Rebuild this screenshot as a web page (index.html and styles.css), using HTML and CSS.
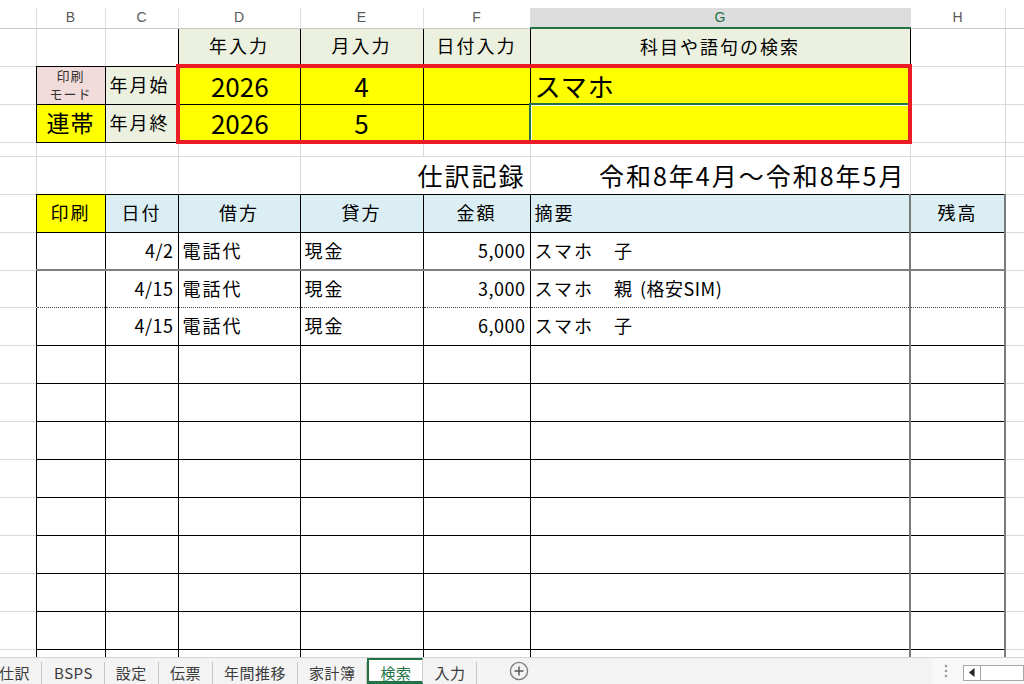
FILE: index.html
```html
<!DOCTYPE html>
<html lang="ja">
<head>
    <meta charset="UTF-8">
    <meta name="viewport" content="width=device-width, initial-scale=1.0">
    <title>検索 - 仕訳記録</title>
    <link rel="stylesheet" href="styles.css">
</head>
<body>
    <div class="ribbon-edge"></div>
    <div class="sheet">
        <table class="grid">
            <colgroup>
                <col class="ca"><col class="cb"><col class="cc"><col class="cd"><col class="ce"><col class="cf"><col class="cg"><col class="ch"><col class="ci">
            </colgroup>
            <thead>
                <tr class="colhdr">
                    <th></th><th>B</th><th>C</th><th>D</th><th>E</th><th>F</th><th class="sel">G</th><th>H</th><th></th>
                </tr>
            </thead>
            <tbody>
                <tr>
                    <td></td><td></td><td></td>
                    <td class="box top head-g c">年入力</td>
                    <td class="box top head-g c">月入力</td>
                    <td class="box top head-g c">日付入力</td>
                    <td class="box top head-g c">科目や語句の検索</td>
                    <td></td><td></td>
                </tr>
                <tr>
                    <td></td>
                    <td class="box top mode c">印刷<br>モード</td>
                    <td class="box top head-g l">年月始</td>
                    <td class="box yel big c rl rt">2026</td>
                    <td class="box yel big c rt">4</td>
                    <td class="box yel rt"></td>
                    <td class="box yel kw rt rr">スマホ</td>
                    <td></td><td></td>
                </tr>
                <tr>
                    <td></td>
                    <td class="box yel rentai c">連帯</td>
                    <td class="box head-g l">年月終</td>
                    <td class="box yel big c rl rb">2026</td>
                    <td class="box yel big c rb">5</td>
                    <td class="box yel rb"></td>
                    <td class="box yel active rb rr"></td>
                    <td></td><td></td>
                </tr>
                <tr class="gap">
                    <td></td><td></td><td></td><td></td><td></td><td></td><td></td><td></td><td></td>
                </tr>
                <tr>
                    <td></td><td></td><td></td><td></td>
                    <td colspan="2" class="title r">仕訳記録</td>
                    <td class="title r">令和8年4月～令和8年5月</td>
                    <td></td><td></td>
                </tr>
                <tr>
                    <td></td>
                    <td class="box top yel c">印刷</td>
                    <td class="box top blue c">日付</td>
                    <td class="box top blue c">借方</td>
                    <td class="box top blue c">貸方</td>
                    <td class="box top blue c">金額</td>
                    <td class="box top blue l">摘要</td>
                    <td class="hcol top blue c">残高</td>
                    <td></td>
                </tr>
                <tr class="r-mid">
                    <td></td><td class="box"></td>
                    <td class="box num">4/2</td>
                    <td class="box l">電話代</td>
                    <td class="box l">現金</td>
                    <td class="box num">5,000</td>
                    <td class="box l">スマホ　子</td>
                    <td class="hcol"></td><td></td>
                </tr>
                <tr class="r-dot">
                    <td class="gl"></td><td class="box"></td>
                    <td class="box num">4/15</td>
                    <td class="box l">電話代</td>
                    <td class="box l">現金</td>
                    <td class="box num">3,000</td>
                    <td class="box l">スマホ　親 <span class="paren">(格安SIM)</span></td>
                    <td class="hcol"></td><td class="gl"></td>
                </tr>
                <tr>
                    <td></td><td class="box"></td>
                    <td class="box num">4/15</td>
                    <td class="box l">電話代</td>
                    <td class="box l">現金</td>
                    <td class="box num">6,000</td>
                    <td class="box l">スマホ　子</td>
                    <td class="hcol"></td><td></td>
                </tr>
                <tr><td></td><td class="box"></td><td class="box"></td><td class="box"></td><td class="box"></td><td class="box"></td><td class="box"></td><td class="hcol"></td><td></td></tr>
                <tr><td></td><td class="box"></td><td class="box"></td><td class="box"></td><td class="box"></td><td class="box"></td><td class="box"></td><td class="hcol"></td><td></td></tr>
                <tr><td></td><td class="box"></td><td class="box"></td><td class="box"></td><td class="box"></td><td class="box"></td><td class="box"></td><td class="hcol"></td><td></td></tr>
                <tr><td></td><td class="box"></td><td class="box"></td><td class="box"></td><td class="box"></td><td class="box"></td><td class="box"></td><td class="hcol"></td><td></td></tr>
                <tr><td></td><td class="box"></td><td class="box"></td><td class="box"></td><td class="box"></td><td class="box"></td><td class="box"></td><td class="hcol"></td><td></td></tr>
                <tr><td></td><td class="box"></td><td class="box"></td><td class="box"></td><td class="box"></td><td class="box"></td><td class="box"></td><td class="hcol"></td><td></td></tr>
                <tr><td></td><td class="box"></td><td class="box"></td><td class="box"></td><td class="box"></td><td class="box"></td><td class="box"></td><td class="hcol"></td><td></td></tr>
                <tr><td></td><td class="box"></td><td class="box"></td><td class="box"></td><td class="box"></td><td class="box"></td><td class="box"></td><td class="hcol"></td><td></td></tr>
                <tr><td></td><td class="box"></td><td class="box"></td><td class="box"></td><td class="box"></td><td class="box"></td><td class="box"></td><td class="hcol"></td><td></td></tr>
            </tbody>
        </table>
    </div>
    <div class="tabbar">
        <div class="tabs">
            <span class="tab">仕訳</span>
            <span class="tab latin">BSPS</span>
            <span class="tab">設定</span>
            <span class="tab">伝票</span>
            <span class="tab">年間推移</span>
            <span class="tab">家計簿</span>
            <span class="tab active">検索</span>
            <span class="tab">入力</span>
        </div>
        <span class="add-sheet">
            <svg width="20" height="20" viewBox="0 0 20 20">
                <circle cx="10" cy="10" r="8.6" fill="none" stroke="#7a7a7a" stroke-width="1.3"/>
                <path d="M10 5.5v9M5.5 10h9" stroke="#555" stroke-width="1.4"/>
            </svg>
        </span>
        <div class="hbar">
            <svg class="grip" width="4" height="14" viewBox="0 0 4 14">
                <circle cx="2" cy="2" r="1.3" fill="#9c9c9c"/>
                <circle cx="2" cy="7" r="1.3" fill="#9c9c9c"/>
                <circle cx="2" cy="12" r="1.3" fill="#9c9c9c"/>
            </svg>
            <div class="hscroll">
                <span class="arrow">
                    <svg width="6" height="9" viewBox="0 0 6 9"><path d="M5.5 0v9L0 4.5z" fill="#222"/></svg>
                </span>
                <span class="track"></span>
            </div>
        </div>
    </div>
</body>
</html>
```

FILE: styles.css
```css
* {
    box-sizing: border-box;
}
html, body {
    margin: 0;
    padding: 0;
}
body {
    width: 1024px;
    height: 684px;
    overflow: hidden;
    background-color: #ffffff;
    color: #000000;
    font-family: "Noto Sans CJK JP", "Noto Sans", sans-serif;
}
.ribbon-edge {
    height: 8px;
    background-color: #ffffff;
}
.sheet {
    height: 649px;
    overflow: hidden;
}

/* grid */
.grid {
    border-collapse: collapse;
    table-layout: fixed;
    width: 1065px;
}
.grid col {
    border-right: 1px solid #d9d9d9;
}
.ca { width: 36px; }
.cb { width: 69px; }
.cc { width: 73px; }
.cd { width: 122px; }
.ce { width: 123px; }
.cf { width: 107px; }
.cg { width: 380px; }
.ch { width: 95px; }
.ci { width: 60px; }

.colhdr th {
    height: 20px;
    padding: 0;
    font-family: "Liberation Sans", sans-serif;
    font-size: 14px;
    font-weight: normal;
    line-height: 19px;
    color: #5a5a5a;
    text-align: center;
    border-right: 1px solid #e0e0e0;
    border-bottom: 1px solid #c8c8c8;
}
.colhdr th.sel {
    background-color: #dcdcdc;
    color: #217346;
    border-bottom: 2px solid #217346;
}
.grid tbody tr {
    height: 38px;
    border-bottom: 1px solid #d9d9d9;
}
.grid tbody tr.gap {
    height: 14px;
}
.grid td {
    padding: 0 4px;
    font-size: 18px;
    letter-spacing: 2px;
    line-height: 1.2;
    white-space: nowrap;
    overflow: hidden;
    vertical-align: middle;
}
.paren {
    letter-spacing: 0.5px;
}

/* alignment */
.c { text-align: center; }
.l { text-align: left; }
.r { text-align: right; }
.num {
    text-align: right;
    letter-spacing: 0.5px !important;
}

/* fills */
.yel { background-color: #ffff00; }
.blue { background-color: #daeef3; }
.head-g { background-color: #ebf1de; }
.mode {
    background-color: #f2dcdb;
    font-size: 13px !important;
    line-height: 18px !important;
    color: #333333;
    letter-spacing: 1px !important;
}

/* borders */
.box {
    border-left: 1px solid #000000;
    border-right: 1px solid #000000;
    border-bottom: 1px solid #000000;
}
.hcol {
    border-left: 2px solid #7a7a7a;
    border-right: 2px solid #7a7a7a;
    border-bottom: 1px solid #000000;
}
.top {
    border-top: 1px solid #000000;
}
.r-mid .box, .r-mid .hcol {
    border-bottom: 2px solid #7f7f7f;
}
.grid tbody tr.r-dot {
    height: 37px;
    border-bottom: none;
}
.r-dot .box, .r-dot .hcol {
    border-bottom: 1px dotted #444444;
}
.r-dot .gl {
    border-bottom: 1px solid #d9d9d9;
}
.rt { border-top: 4px solid #ec1c24; }
.rb { border-bottom: 4px solid #ec1c24; }
.rl { border-left: 4px solid #ec1c24; }
.rr { border-right: 4px solid #ec1c24; }
.active {
    border-top: 2px solid #217346;
    border-left: 2px solid #217346;
    box-shadow: inset 1px 1px 0 #ffffff;
}

/* text sizes */
.big {
    font-size: 26px !important;
    letter-spacing: 0 !important;
}
.kw {
    font-size: 26px !important;
    letter-spacing: 1px !important;
}
.rentai {
    font-size: 23px !important;
    letter-spacing: 1px !important;
}
.title {
    font-size: 25px !important;
    letter-spacing: 2px !important;
}

/* sheet tabs */
.tabbar {
    height: 27px;
    display: flex;
    align-items: stretch;
    background-color: #f3f3f3;
    border-top: 1px solid #d4d4d4;
    font-size: 15px;
    color: #3c3c3c;
}
.tabs {
    display: flex;
    align-items: flex-end;
    margin-left: -12px;
}
.tab {
    height: 22px;
    padding: 0 11px;
    line-height: 21px;
    letter-spacing: 0.5px;
    border-right: 1px solid #c6c6c6;
    white-space: nowrap;
}
.tab.latin {
    letter-spacing: 0.5px;
    padding: 0 11px 0 12px;
}
.tab.active {
    height: 26px;
    line-height: 25px;
    background-color: #ffffff;
    color: #217346;
    border-bottom: 3px solid #217346;
    border-right: 1px solid #d0d0d0;
}
.add-sheet {
    display: flex;
    align-items: center;
    margin-left: 32px;
}
.hbar {
    margin-left: auto;
    width: 92px;
    display: flex;
    align-items: center;
    gap: 15px;
    padding-left: 12px;
    background-color: #f8f8f8;
}
.hscroll {
    flex: 1;
    display: flex;
    height: 16px;
    margin-top: 3px;
}
.arrow {
    width: 18px;
    display: flex;
    align-items: center;
    justify-content: center;
    background-color: #ffffff;
    border: 1px solid #a6a6a6;
}
.track {
    flex: 1;
    background-color: #ffffff;
    border: 1px solid #a6a6a6;
    border-left: none;
}
```
